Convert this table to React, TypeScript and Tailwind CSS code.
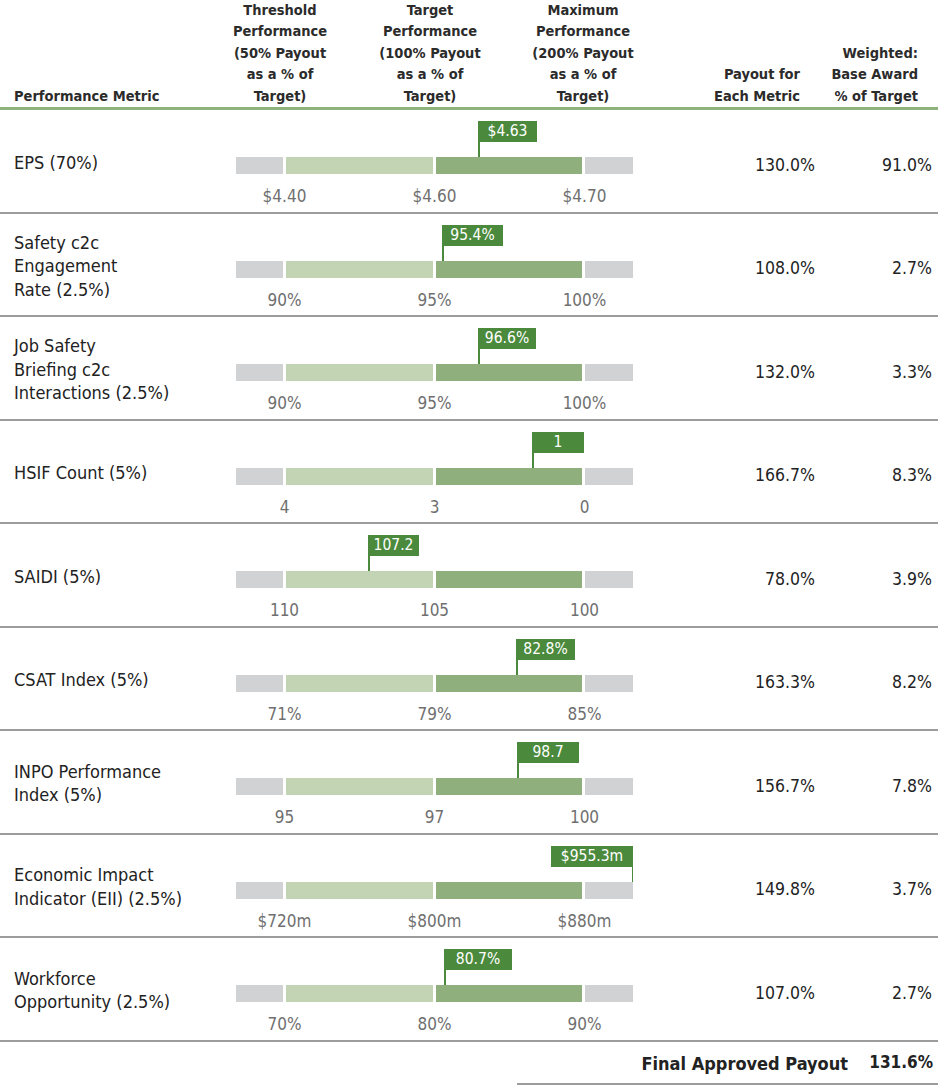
type Row = {
  label: string[];
  ticks: [string, string, string];
  value: string;
  left?: number;
  right?: boolean;
  w: number;
  payout: string;
  weighted: string;
};

const rows: Row[] = [
  { label: ["EPS (70%)"], ticks: ["$4.40", "$4.60", "$4.70"], value: "$4.63", left: 242, w: 59, payout: "130.0%", weighted: "91.0%" },
  { label: ["Safety c2c", "Engagement", "Rate (2.5%)"], ticks: ["90%", "95%", "100%"], value: "95.4%", left: 206, w: 61, payout: "108.0%", weighted: "2.7%" },
  { label: ["Job Safety", "Briefing c2c", "Interactions (2.5%)"], ticks: ["90%", "95%", "100%"], value: "96.6%", left: 242, w: 58, payout: "132.0%", weighted: "3.3%" },
  { label: ["HSIF Count (5%)"], ticks: ["4", "3", "0"], value: "1", left: 296, w: 52, payout: "166.7%", weighted: "8.3%" },
  { label: ["SAIDI (5%)"], ticks: ["110", "105", "100"], value: "107.2", left: 132, w: 51, payout: "78.0%", weighted: "3.9%" },
  { label: ["CSAT Index (5%)"], ticks: ["71%", "79%", "85%"], value: "82.8%", left: 280, w: 59, payout: "163.3%", weighted: "8.2%" },
  { label: ["INPO Performance", "Index (5%)"], ticks: ["95", "97", "100"], value: "98.7", left: 281, w: 62, payout: "156.7%", weighted: "7.8%" },
  { label: ["Economic Impact", "Indicator (EII) (2.5%)"], ticks: ["$720m", "$800m", "$880m"], value: "$955.3m", right: true, w: 82, payout: "149.8%", weighted: "3.7%" },
  { label: ["Workforce", "Opportunity (2.5%)"], ticks: ["70%", "80%", "90%"], value: "80.7%", left: 208, w: 68, payout: "107.0%", weighted: "2.7%" },
];

const font = { fontFamily: '"DejaVu Sans Condensed", "DejaVu Sans", sans-serif' };

const Flag = ({ row }: { row: Row }) => (
  <div
    className={`absolute top-[11px] flex flex-col ${row.right ? "items-end" : "items-start"}`}
    style={row.right ? { right: 0 } : { left: row.left }}
  >
    <div
      className="h-[21px] bg-[#4b8a3d] text-center text-[15.5px] leading-[21px] text-white"
      style={{ width: row.w }}
    >
      {row.value}
    </div>
    <div className="h-[15px] w-[1.5px] bg-[#4b8a3d]" />
  </div>
);

const MetricRow = ({ row }: { row: Row }) => (
  <div className="box-border flex h-[103.5px] border-b-2 border-[#9c9c9c]">
    {/* Metric */}
    <div className="flex w-[236px] shrink-0 items-center pl-[14px] pt-[3px] text-[18px] leading-[23.5px] text-[#222]">
      <div>
        {row.label.map((l) => (
          <div key={l}>{l}</div>
        ))}
      </div>
    </div>
    {/* Bar */}
    <div className="relative w-[397px] shrink-0 pt-[47px]">
      <Flag row={row} />
      <div className="flex h-[17px] gap-[3px]">
        <div className="w-[47px] bg-[#d1d2d4]" />
        <div className="w-[147px] bg-[#c3d4b5]" />
        <div className="w-[146px] bg-[#8fb07c]" />
        <div className="w-[48px] bg-[#d1d2d4]" />
      </div>
      <div className="ml-[-26.5px] mt-[11px] flex text-[17px] leading-[22px] text-[#6f6f6f]">
        {row.ticks.map((t) => (
          <div key={t} className="w-[150px] shrink-0 text-center">
            {t}
          </div>
        ))}
      </div>
    </div>
    {/* Payout */}
    <div className="flex w-[182px] shrink-0 items-center justify-end pt-[8px] text-[17.5px] text-[#222]">
      {row.payout}
    </div>
    {/* Weighted */}
    <div className="flex w-[117px] shrink-0 items-center justify-end pt-[8px] text-[17.5px] text-[#222]">
      {row.weighted}
    </div>
  </div>
);

export default function App() {
  return (
    <div className="w-[938px] bg-white" style={font}>
      {/* Header */}
      <div className="box-border flex h-[110px] items-end border-b-[3px] border-[#8db27c] text-[14.5px] font-bold leading-[21.4px] text-[#2b2b2b]">
        <div className="w-[205px] shrink-0 pl-[14px]">Performance Metric</div>
        <div className="w-[150px] shrink-0 text-center">
          Threshold<br />Performance<br />(50% Payout<br />as a % of<br />Target)
        </div>
        <div className="w-[150px] shrink-0 text-center">
          Target<br />Performance<br />(100% Payout<br />as a % of<br />Target)
        </div>
        <div className="w-[156px] shrink-0 text-center">
          Maximum<br />Performance<br />(200% Payout<br />as a % of<br />Target)
        </div>
        <div className="w-[139px] shrink-0 text-right">
          Payout for<br />Each Metric
        </div>
        <div className="w-[118px] shrink-0 text-right">
          Weighted:<br />Base Award<br />% of Target
        </div>
      </div>

      {rows.map((r) => (
        <MetricRow key={r.value} row={r} />
      ))}

      {/* Total */}
      <div className="ml-[517px] box-border flex h-[43px] items-center justify-end border-b-2 border-[#9c9c9c] pr-[5px] pt-[2px] font-bold text-[#222]">
        <span className="text-[18px]">Final Approved Payout</span>
        <span className="w-[85px] text-right text-[17px]">131.6%</span>
      </div>
    </div>
  );
}
